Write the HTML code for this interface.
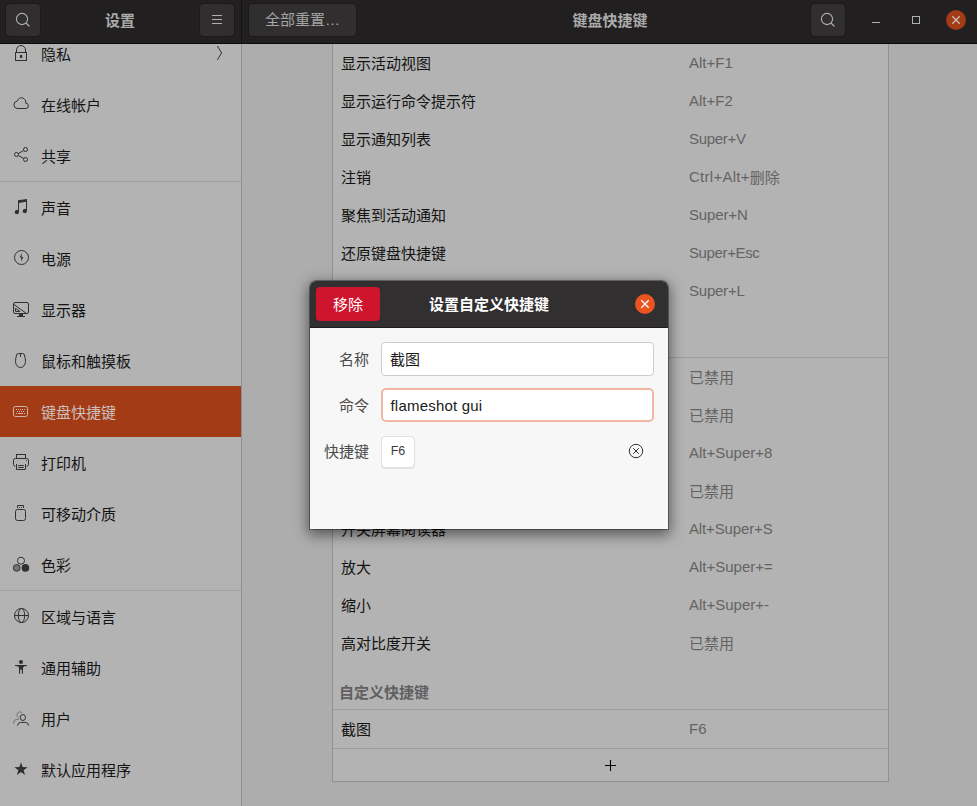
<!DOCTYPE html>
<html lang="zh-CN">
<head>
<meta charset="utf-8">
<title>键盘快捷键</title>
<style>
html,body{margin:0;padding:0;}
body{width:977px;height:806px;overflow:hidden;position:relative;background:#adadad;
  font-family:"Liberation Sans","Noto Sans CJK SC",sans-serif;font-size:15px;color:#141414;}
*{box-sizing:border-box;}
.abs{position:absolute;}
/* header */
#hdr{left:0;top:0;width:977px;height:44px;background:#211f1f;border-bottom:1px solid #0c0b0b;}
#hdrsep{left:241px;top:0;width:1px;height:44px;background:#151414;}
.hbtn{position:absolute;top:4px;height:32px;background:#302e2e;box-shadow:0 0 0 1px #1b1a1a;border-radius:4px;color:#a9a9a9;}
.hbtn svg{position:absolute;left:9px;top:8px;}
.htitle{position:absolute;color:#aaaaaa;font-weight:bold;text-align:center;line-height:20px;font-size:15px;}
/* sidebar */
#side{left:0;top:44px;width:241px;height:762px;background:#b3b3b3;overflow:hidden;}
#sideborder{left:241px;top:44px;width:1px;height:762px;background:#8f8f8f;}
.srow{position:absolute;left:0;width:241px;height:51px;}
.srow .lbl{position:absolute;left:41px;top:1px;line-height:51px;white-space:nowrap;}
.srow svg{position:absolute;left:13px;top:17px;width:16px;height:16px;overflow:visible;color:#303030;}
.srow.sel svg{color:#c9b3ab;}
.srow.sel{background:#a33b16;color:#cabfbc;}
.ssep{position:absolute;left:0;width:241px;height:1px;background:#a0a0a0;}
/* list */
#list{left:332px;top:44px;width:557px;height:738px;background:#b3b3b3;border:1px solid #929292;border-top:none;}
.row{position:absolute;left:333px;width:555px;height:38px;line-height:38px;}
.row .n{position:absolute;left:8px;top:1px;white-space:nowrap;}
.row .k.cj{top:1px;}
.cjs{position:relative;top:1px;}
.row .k{position:absolute;left:356px;top:0;white-space:nowrap;color:#636363;}
.hline{position:absolute;left:333px;width:555px;height:1px;background:#9d9d9d;}
.sect{position:absolute;left:339px;font-weight:bold;color:#606060;line-height:20px;white-space:nowrap;}
/* dialog */
#dlg{left:310px;top:281px;width:358px;height:248px;border-radius:6px 6px 0 0;background:#f7f7f7;
  box-shadow:0 0 0 1px rgba(0,0,0,0.35),0 4px 14px 2px rgba(0,0,0,0.5);overflow:hidden;color:#3d3d3d;}
#dhdr{left:0;top:0;width:358px;height:47px;background:#312f2f;border-bottom:1px solid #1d1c1c;}
#dtitle{left:0;top:1px;width:358px;line-height:46px;text-align:center;color:#fff;font-weight:bold;font-size:15px;}
#rm{left:6px;top:6px;width:64px;height:34px;background:#cf142d;border-radius:4px;color:#fff;text-align:center;line-height:35px;}
#dclose{left:325px;top:13px;width:20px;height:20px;border-radius:50%;background:#e95420;}
.dlabel{position:absolute;width:59px;left:0;text-align:right;line-height:20px;color:#4a4a4a;white-space:nowrap;}
.entry{position:absolute;left:71px;width:273px;height:34px;background:#fff;border:1px solid #cdcdcd;border-radius:4px;padding-left:9px;line-height:32px;color:#1a1a1a;}
.entry.focus{border:2px solid #f1b6a4;border-radius:5px;line-height:30px;}
#key{left:71px;top:155px;width:34px;height:32px;background:#fff;border:1px solid #e0e0e0;border-radius:4px;text-align:center;line-height:28px;font-size:12.5px;color:#3d3d3d;box-shadow:0 1px 0 #e4e4e4;}
</style>
</head>
<body>
<!-- header -->
<div id="hdr" class="abs"></div>
<div id="hdrsep" class="abs"></div>
<div class="hbtn" style="left:6px;width:34px;"><svg width="16" height="16" viewBox="0 0 16 16"><circle cx="7" cy="7" r="5.600" fill="none" stroke="#b0b0b0" stroke-width="1.1"/><path d="M11 11l3.400 3.400" stroke="#b0b0b0" stroke-width="1.300" fill="none"/></svg></div>
<div class="htitle" style="left:60px;top:11px;width:120px;">设置</div>
<div class="hbtn" style="left:200px;width:34px;"><svg width="16" height="16" viewBox="0 0 16 16"><path d="M3 3.500h10M3 7.500h10M3 11.500h10" stroke="#b0b0b0" stroke-width="1" fill="none"/></svg></div>
<div class="hbtn" style="left:249px;width:107px;text-align:center;line-height:32px;color:#a5a5a5;font-size:15px;">全部重置…</div>
<div class="htitle" style="left:510px;top:11px;width:200px;">键盘快捷键</div>
<div class="hbtn" style="left:811px;width:34px;"><svg width="16" height="16" viewBox="0 0 16 16"><circle cx="7" cy="7" r="5.600" fill="none" stroke="#b0b0b0" stroke-width="1.1"/><path d="M11 11l3.400 3.400" stroke="#b0b0b0" stroke-width="1.300" fill="none"/></svg></div>
<svg class="abs" style="left:866px;top:10px;" width="20" height="20" viewBox="0 0 20 20"><path d="M6 12.500h8" stroke="#b4b4b4" stroke-width="1" fill="none"/></svg>
<svg class="abs" style="left:906px;top:10px;" width="20" height="20" viewBox="0 0 20 20"><rect x="6.5" y="6.500" width="7" height="7" stroke="#b0b0b0" stroke-width="1" fill="none"/></svg>
<div class="abs" style="left:946px;top:10px;width:20px;height:20px;border-radius:50%;background:#a33b16;"></div>
<svg class="abs" style="left:946px;top:10px;" width="20" height="20" viewBox="0 0 20 20"><path d="M6.300 6.300l7.400 7.400M13.700 6.300l-7.400 7.400" stroke="#cdbdb6" stroke-width="1.300" fill="none"/></svg>

<!-- sidebar -->
<div id="side" class="abs">
<div class="srow" style="top:-16px;"><svg viewBox="0 0 16 16"><rect x="2.5" y="7.5" width="11" height="8" stroke="currentColor" fill="none" stroke-width="1"/><path d="M3.5 7.500V5a4.500 4.500 0 0 1 9 0V7.500" stroke="currentColor" fill="none" stroke-width="1"/><rect x="7" y="10" width="2.200" height="3" fill="currentColor"/></svg><span class="lbl">隐私</span><svg viewBox="0 0 16 16" style="left:212px;"><path d="M5.400 1L9.600 7.900L5.400 14.800" stroke="currentColor" fill="none" stroke-width="1" stroke-width="1.100"/></svg></div>
<div class="srow" style="top:35px;"><svg viewBox="0 0 16 16"><path d="M4.200 12.500A3.750 3.750 0 0 1 4.300 5.050A4.200 4.200 0 0 1 12.600 7.100A2.700 2.700 0 0 1 12.800 12.500z" stroke="currentColor" fill="none" stroke-width="1"/></svg><span class="lbl">在线帐户</span></div>
<div class="srow" style="top:86px;"><svg viewBox="0 0 16 16"><circle cx="12.500" cy="2.500" r="2" stroke="currentColor" fill="none" stroke-width="1"/><circle cx="12.500" cy="12.500" r="2" stroke="currentColor" fill="none" stroke-width="1"/><circle cx="3.500" cy="7.500" r="2" stroke="currentColor" fill="none" stroke-width="1"/><path d="M5.300 6.500l5.400 -3M5.300 8.500l5.400 3" stroke="currentColor" fill="none" stroke-width="1"/></svg><span class="lbl">共享</span></div>
<div class="srow" style="top:138px;"><svg viewBox="0 0 16 16"><path d="M5 1.300L14 0V12a2.100 2.100 0 1 1 -1 -1.800V2.750L6 4V13a2.100 2.100 0 1 1 -1 -1.800z" fill="currentColor"/></svg><span class="lbl">声音</span></div>
<div class="srow" style="top:189px;"><svg viewBox="0 0 16 16"><circle cx="8.500" cy="7.500" r="7" stroke="currentColor" fill="none" stroke-width="1"/><path d="M8.600 2.900L6.800 7.600H8.300V11.800L10.300 7H8.700z" fill="currentColor"/></svg><span class="lbl">电源</span></div>
<div class="srow" style="top:240px;"><svg viewBox="0 0 16 16"><rect x=".5" y="1.500" width="15" height="11" rx="1.500" stroke="currentColor" fill="none" stroke-width="1"/><path d="M6 13h4v2h2v1h-8v-1h2z" fill="currentColor"/><path d="M.5 3.200L13.500 12.500" stroke="currentColor" fill="none" stroke-width="1"/><path d="M2.500 7.300V10.500H7z" stroke="currentColor" fill="none" stroke-width="1"/></svg><span class="lbl">显示器</span></div>
<div class="srow" style="top:291px;"><svg viewBox="0 0 16 16"><path d="M5.500 1.500H9.500Q11.500 1.500 11.700 4Q12.500 7 12.500 9.500A5 6 0 0 1 2.500 9.500Q2.500 7 3.300 4Q3.500 1.500 5.500 1.500z" stroke="currentColor" fill="none" stroke-width="1"/><path d="M7.500 1.500V4.800" stroke="currentColor" fill="none" stroke-width="1" stroke-width="1.200"/></svg><span class="lbl">鼠标和触摸板</span></div>
<div class="srow sel" style="top:342px;"><svg viewBox="0 0 16 16"><rect x=".5" y="3.500" width="14" height="10" rx="1.800" stroke="currentColor" fill="none" stroke-width="1"/><path d="M3 6.500h1M5 6.500h1M7 6.500h1M9 6.500h1M11 6.500h1M4 8.500h1M6 8.500h1M8 8.500h1M10 8.500h1M3 10.500h1M5 10.500h5M11 10.500h1" stroke="currentColor" fill="none" stroke-width="1"/></svg><span class="lbl">键盘快捷键</span></div>
<div class="srow" style="top:393px;"><svg viewBox="0 0 16 16"><rect x="3.500" y=".5" width="9" height="4" stroke="currentColor" fill="none" stroke-width="1"/><path d="M2.300 12.300Q.5 12 .5 10.500V6.500Q.5 4.500 2.500 4.500H13.500Q15.500 4.500 15.500 6.500V10.500Q15.500 12 13.700 12.300" stroke="currentColor" fill="none" stroke-width="1"/><path d="M3.500 10V15.500H12.500V10" stroke="currentColor" fill="none" stroke-width="1"/><path d="M5.200 11.500H10.800M5.200 13.500H10.800" stroke="currentColor" fill="none" stroke-width="1"/><circle cx="13.500" cy="6.500" r=".6" fill="currentColor"/></svg><span class="lbl">打印机</span></div>
<div class="srow" style="top:444px;"><svg viewBox="0 0 16 16"><rect x="2.500" y="4.500" width="10" height="11" rx="2" stroke="currentColor" fill="none" stroke-width="1"/><path d="M4.500 3V.5H10.500V3" stroke="currentColor" fill="none" stroke-width="1"/><circle cx="6.500" cy="2.500" r=".6" fill="currentColor"/><circle cx="8.500" cy="2.500" r=".6" fill="currentColor"/></svg><span class="lbl">可移动介质</span></div>
<div class="srow" style="top:495px;"><svg viewBox="0 0 16 16"><circle cx="8" cy="4.700" r="3.500" fill="#b9b9b9" stroke="currentColor"/><circle cx="3.700" cy="11.900" r="3.300" fill="#777" stroke="currentColor"/><circle cx="12.400" cy="11.900" r="3.800" fill="currentColor"/></svg><span class="lbl">色彩</span></div>
<div class="srow" style="top:547px;"><svg viewBox="0 0 16 16"><circle cx="8.500" cy="7.500" r="7" stroke="currentColor" fill="none" stroke-width="1"/><ellipse cx="8.500" cy="7.500" rx="3.200" ry="7" stroke="currentColor" fill="none" stroke-width="1"/><path d="M1.500 7.500h14" stroke="currentColor" fill="none" stroke-width="1"/></svg><span class="lbl">区域与语言</span></div>
<div class="srow" style="top:598px;"><svg viewBox="0 0 16 16"><circle cx="8" cy="2.900" r="2" fill="currentColor"/><path d="M2 6H14V7L11.500 7.200L10 8.500V14.800H8.900V10.700H7.100V14.800H6V8.500L4.500 7.200L2 7z" fill="currentColor"/></svg><span class="lbl">通用辅助</span></div>
<div class="srow" style="top:649px;"><svg viewBox="0 0 16 16"><ellipse cx="9.900" cy="7.500" rx="2.600" ry="3" stroke="currentColor" fill="none" stroke-width="1" stroke-width="1.100"/><path d="M4.400 15.600Q5.200 12.400 7.500 12.400H12.800Q15 12.400 15.700 15.600" stroke="currentColor" fill="none" stroke-width="1" stroke-width="1.100"/><path d="M8.700 2.600A2.800 2.800 0 1 0 5.800 7.300M.5 13.500Q.7 9.500 3.500 9.400H5.800" stroke="#6b6b6b" fill="none" stroke-width="1"/></svg><span class="lbl">用户</span></div>
<div class="srow" style="top:700px;"><svg viewBox="0 0 16 16"><path d="M8.00 1.30L9.62 6.08L14.66 6.14L10.62 9.15L12.11 13.96L8.00 11.05L3.89 13.96L5.38 9.15L1.34 6.14L6.38 6.08z" fill="currentColor"/></svg><span class="lbl">默认应用程序</span></div>
<div class="ssep" style="top:137px;"></div>
<div class="ssep" style="top:546px;"></div>
</div>
<div id="sideborder" class="abs"></div>

<!-- list -->
<div id="list" class="abs"></div>
<div class="row" style="top:44px;"><span class="n">显示活动视图</span><span class="k">Alt+F1</span></div>
<div class="row" style="top:82px;"><span class="n">显示运行命令提示符</span><span class="k">Alt+F2</span></div>
<div class="row" style="top:120px;"><span class="n">显示通知列表</span><span class="k" style="letter-spacing:-0.3px">Super+V</span></div>
<div class="row" style="top:158px;"><span class="n">注销</span><span class="k"><span style="letter-spacing:0.27px">Ctrl+Alt+</span><span class="cjs">删除</span></span></div>
<div class="row" style="top:196px;"><span class="n">聚焦到活动通知</span><span class="k" style="letter-spacing:-0.14px">Super+N</span></div>
<div class="row" style="top:234px;"><span class="n">还原键盘快捷键</span><span class="k" style="letter-spacing:-0.38px">Super+Esc</span></div>
<div class="row" style="top:272px;"><span class="n">锁定屏幕</span><span class="k" style="letter-spacing:-0.23px">Super+L</span></div>
<div class="row" style="top:358px;"><span class="n">减小文本大小</span><span class="k cj">已禁用</span></div>
<div class="row" style="top:396px;"><span class="n">增大文本大小</span><span class="k cj">已禁用</span></div>
<div class="row" style="top:434px;"><span class="n">打开或关闭缩放</span><span class="k">Alt+Super+8</span></div>
<div class="row" style="top:472px;"><span class="n">开关屏幕键盘</span><span class="k cj">已禁用</span></div>
<div class="row" style="top:510px;"><span class="n">开关屏幕阅读器</span><span class="k" style="letter-spacing:-0.13px">Alt+Super+S</span></div>
<div class="row" style="top:548px;"><span class="n">放大</span><span class="k">Alt+Super+=</span></div>
<div class="row" style="top:586px;"><span class="n">缩小</span><span class="k">Alt+Super+-</span></div>
<div class="row" style="top:624px;"><span class="n">高对比度开关</span><span class="k cj">已禁用</span></div>
<div class="row" style="top:710px;"><span class="n">截图</span><span class="k">F6</span></div>
<div class="hline" style="top:357px;"></div>
<div class="hline" style="top:709px;"></div>
<div class="hline" style="top:748px;"></div>
<div class="sect" style="top:332px;">无障碍</div>
<div class="sect" style="top:683px;">自定义快捷键</div>
<svg class="abs" style="left:602px;top:758px;" width="16" height="16" viewBox="0 0 16 16"><path d="M8.500 2v11M3 7.500h11" stroke="#000" stroke-width="1.100" fill="none"/></svg>

<!-- dialog -->
<div id="dlg" class="abs">
  <div id="dhdr" class="abs"></div>
  <div id="dtitle" class="abs">设置自定义快捷键</div>
  <div id="rm" class="abs">移除</div>
  <div id="dclose" class="abs"></div>
  <svg class="abs" style="left:325px;top:13px;" width="20" height="20" viewBox="0 0 20 20"><path d="M6.300 6.300l7.400 7.400M13.700 6.300l-7.400 7.400" stroke="#fff" stroke-width="1.300" fill="none"/></svg>
  <div class="dlabel" style="top:69px;">名称</div>
  <div class="entry" style="top:61px;padding-top:1px;padding-left:8px;">截图</div>
  <div class="dlabel" style="top:115px;">命令</div>
  <div class="entry focus" style="top:107px;padding-left:7.5px;padding-top:1px;letter-spacing:0.2px;">flameshot gui</div>
  <div class="dlabel" style="top:161px;">快捷键</div>
  <div id="key" class="abs">F6</div>
  <svg class="abs" style="left:317px;top:161px;" width="18" height="18" viewBox="0 0 18 18"><circle cx="9" cy="9" r="6.700" fill="none" stroke="#333" stroke-width="1"/><path d="M6.200 6.200l5.600 5.600M11.800 6.200l-5.600 5.600" stroke="#333" stroke-width="1" fill="none"/></svg>
</div>
</body>
</html>
